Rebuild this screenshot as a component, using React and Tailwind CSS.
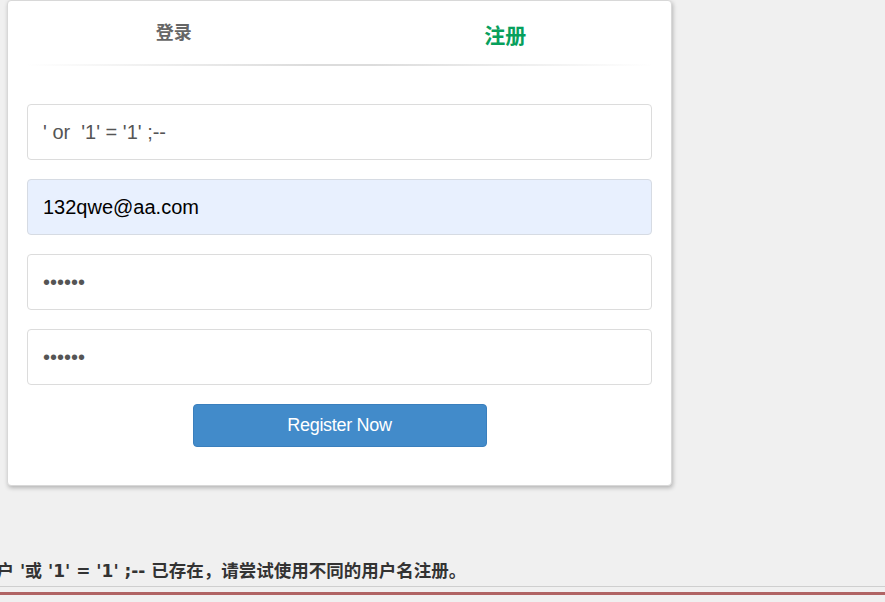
export default function App() {
  return (
    <div className="w-[885px] h-[602px] bg-[#f0f0f0] overflow-hidden font-['Liberation_Sans','Noto_Sans_CJK_SC',sans-serif] flex flex-col">
      <div className="ml-[7px] w-[665px] h-[486px] bg-white border border-[#d8d8d8] rounded-[4px] shadow-[1px_2px_4px_rgba(0,0,0,0.25)] flex flex-col">
        <div className="flex h-[63px]">
          <div className="w-1/2 flex justify-center pt-[20px]">
            <span className="text-[18px] font-bold text-[#666] leading-[24px]">登录</span>
          </div>
          <div className="w-1/2 flex justify-center pt-[22px]">
            <span className="text-[21px] font-bold text-[#07a05c] leading-[26px]">注册</span>
          </div>
        </div>
        <div className="mx-[18px] h-[2px] bg-[linear-gradient(to_right,rgba(220,220,220,0),#dcdcdc_45%,#dcdcdc_55%,rgba(220,220,220,0))]" />
        <div className="px-[19px] pt-[38px] flex flex-col gap-[19px]">
          <input
            readOnly
            value="' or  '1' = '1' ;--"
            className="h-[56px] w-full border border-[#dcdcdc] rounded-[4px] px-[15px] text-[20px] text-[#555] outline-none"
          />
          <input
            readOnly
            value="132qwe@aa.com"
            className="h-[56px] w-full border border-[#d6dbe3] bg-[#e8f0fe] rounded-[4px] px-[15px] text-[20px] text-black outline-none"
          />
          <input
            readOnly
            type="password"
            value="123456"
            className="h-[56px] w-full border border-[#dcdcdc] rounded-[4px] px-[15px] text-[20px] text-[#555] outline-none"
          />
          <input
            readOnly
            type="password"
            value="123456"
            className="h-[56px] w-full border border-[#dcdcdc] rounded-[4px] px-[15px] text-[20px] text-[#555] outline-none"
          />
        </div>
        <div className="flex justify-center pt-[19px]">
          <button className="w-[294px] h-[43px] bg-[#428bca] border border-[#3a7fbd] rounded-[4px] text-white text-[18px] tracking-[-0.3px]">
            Register Now
          </button>
        </div>
      </div>
      <div className="mt-[75px] -ml-[21px] font-bold text-[#333] leading-[20px] whitespace-nowrap font-['DejaVu_Sans','Noto_Sans_CJK_SC',sans-serif]">
        <span className="text-[17.5px]">用户</span>
        <span className="text-[17px]"> '或 '1' = '1' ;-- </span>
        <span className="text-[17.5px]">已存在，请尝试使用不同的用户名注册。</span>
      </div>
      <div className="mt-[4px] h-px bg-[#cfcfcf]" />
      <div className="mt-[5px] h-[3px] bg-[#b06464]" />
    </div>
  );
}
